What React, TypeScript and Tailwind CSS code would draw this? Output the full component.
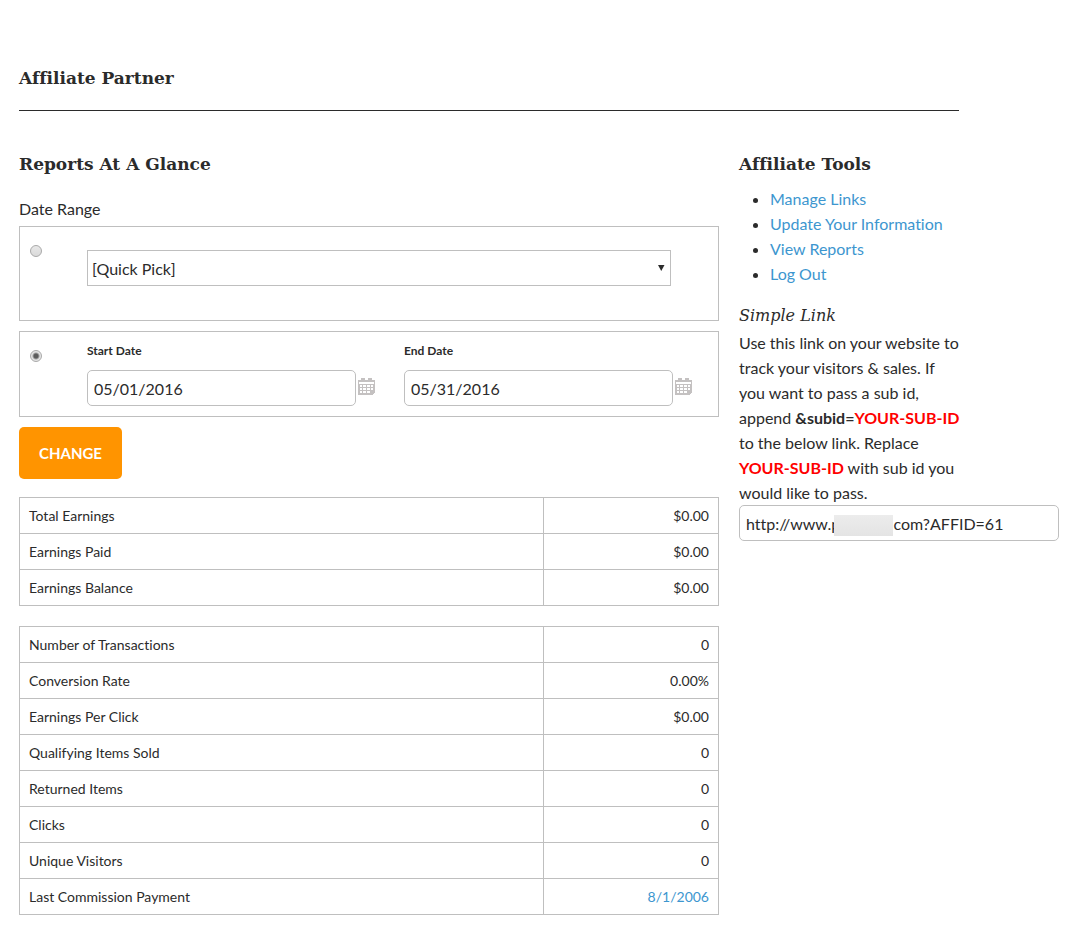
import { useState } from 'react';

const EARNINGS = [
  ['Total Earnings', '$0.00'],
  ['Earnings Paid', '$0.00'],
  ['Earnings Balance', '$0.00'],
];

const ACTIVITY = [
  ['Number of Transactions', '0'],
  ['Conversion Rate', '0.00%'],
  ['Earnings Per Click', '$0.00'],
  ['Qualifying Items Sold', '0'],
  ['Returned Items', '0'],
  ['Clicks', '0'],
  ['Unique Visitors', '0'],
  ['Last Commission Payment', '8/1/2006'],
];

const TOOLS = ['Manage Links', 'Update Your Information', 'View Reports', 'Log Out'];

const AFFILIATE_URL = 'http://www.p' + '\u00a0'.repeat(13) + 'com?AFFID=61';

const headingClass = "font-['DejaVu_Serif',serif] text-[17px] leading-6 font-bold";

function CalendarIcon() {
  return (
    <svg width="17" height="17" viewBox="0 0 17 17" fill="#c4c1c1" shapeRendering="crispEdges" aria-hidden="true">
      <path
        fillRule="evenodd"
        d="M0 2H17V14L14 17H0ZM1 4V6H16V4ZM2 7V9H4V7ZM5 7V9H8V7ZM9 7V9H12V7ZM13 7V9H15V7ZM2 10V12H4V10ZM5 10V12H8V10ZM9 10V12H12V10ZM13 10V12H15V10ZM2 13V15H4V13ZM5 13V15H8V13ZM9 13V15H12V13Z"
      />
      <path d="M3 0H7V4H3ZM10 0H14V4H10Z" />
    </svg>
  );
}

function Radio({ label, checked, onChange }: { label: string; checked: boolean; onChange: () => void }) {
  return (
    <input
      type="radio"
      name="range"
      aria-label={label}
      checked={checked}
      onChange={onChange}
      className="size-3 shrink-0 appearance-none rounded-full border border-[#a9a9a9] bg-linear-to-b from-[#e8e8e8] to-[#dadada] checked:bg-[radial-gradient(circle,#5c5c5c_0_2px,#e4e4e4_4px)]"
    />
  );
}

function DateField({ id, label, initial }: { id: string; label: string; initial: string }) {
  return (
    <div className="min-w-0 flex-1">
      <label htmlFor={id} className="block text-xs leading-4 font-bold">
        {label}
      </label>
      <div className="mt-[11px] flex items-center gap-0.5">
        <input
          id={id}
          defaultValue={initial}
          className="h-9 w-full min-w-0 rounded-[5px] border border-[#bfbfbf] bg-white px-1.5 text-base"
        />
        <button type="button" aria-label={`Choose ${label.toLowerCase()}`} className="-mt-1 shrink-0">
          <CalendarIcon />
        </button>
      </div>
    </div>
  );
}

function ReportTable({ rows }: { rows: string[][] }) {
  return (
    <table className="w-full table-fixed border-collapse text-sm leading-[19px]">
      <colgroup>
        <col className="w-3/4" />
        <col className="w-1/4" />
      </colgroup>
      <tbody>
        {rows.map(([label, value]) => (
          <tr key={label}>
            <th scope="row" className="border border-[#bfbfbf] px-[9px] py-2 text-left font-normal">
              {label}
            </th>
            <td className="border border-[#bfbfbf] px-[9px] py-2 text-right">
              {value.includes('/') ? (
                <a href="#payment" className="text-[#3d96cf]">
                  {value}
                </a>
              ) : (
                value
              )}
            </td>
          </tr>
        ))}
      </tbody>
    </table>
  );
}

export default function App() {
  const [range, setRange] = useState('dates');
  return (
    <main className="min-h-screen bg-white pt-[66px] pr-5 pb-6 pl-[19px] font-[Lato,sans-serif] text-base leading-[25px] text-[#2b2b2b] [font-variant-ligatures:none]">
      <header className="max-w-[940px] border-b border-[#2b2b2b] pb-5">
        <h1 className={headingClass}>Affiliate Partner</h1>
      </header>

      <div className="mt-[41px] flex items-start gap-5">
        <section className="min-w-0 flex-1">
          <h2 className={headingClass}>Reports At A Glance</h2>
          <form className="mt-5" onSubmit={(e) => e.preventDefault()}>
            <p>Date Range</p>
            <div className="mt-[5px] flex border border-[#bfbfbf] pt-[23px] pr-[47px] pb-[34px] pl-2.5">
              <div className="-mt-[5px] flex w-[57px] shrink-0">
                <Radio label="Quick pick" checked={range === 'quick'} onChange={() => setRange('quick')} />
              </div>
              <div className="relative flex-1">
                <select
                  aria-label="Quick pick range"
                  className="block h-9 w-full appearance-none border border-[#bfbfbf] bg-white px-1 pt-0.5 text-base"
                >
                  <option>[Quick Pick]</option>
                </select>
                <svg
                  className="pointer-events-none absolute top-3.5 right-1.5"
                  width="7"
                  height="7"
                  viewBox="0 0 7 7"
                  fill="#2b2b2b"
                  aria-hidden="true"
                >
                  <path d="M0 1H6.5L3.25 7Z" />
                </svg>
              </div>
            </div>
            <div className="mt-2.5 flex border border-[#bfbfbf] pt-[11px] pr-[26px] pb-2.5 pl-2.5">
              <div className="mt-[7px] flex w-[57px] shrink-0">
                <Radio label="Custom dates" checked={range === 'dates'} onChange={() => setRange('dates')} />
              </div>
              <div className="flex flex-1 gap-[29px]">
                <DateField id="start-date" label="Start Date" initial="05/01/2016" />
                <DateField id="end-date" label="End Date" initial="05/31/2016" />
              </div>
            </div>
            <button
              type="submit"
              className="mt-2.5 block h-[52px] rounded-[5px] bg-[#ff9400] px-5 text-[15px] font-bold text-white"
            >
              CHANGE
            </button>
          </form>
          <div className="mt-[18px] flex flex-col gap-5">
            <ReportTable rows={EARNINGS} />
            <ReportTable rows={ACTIVITY} />
          </div>
        </section>

        <aside className="w-80 shrink-0">
          <h2 className={headingClass}>Affiliate Tools</h2>
          <ul className="mt-2.5 list-disc pl-[31px]">
            {TOOLS.map((tool) => (
              <li key={tool}>
                <a href="#tools" className="text-[#3d96cf]">
                  {tool}
                </a>
              </li>
            ))}
          </ul>
          <h3 className="mt-[18px] font-['DejaVu_Serif',serif] text-base leading-6 italic">Simple Link</h3>
          <p className="mt-0.5 max-w-[225px]">
            Use this link on your website to track your visitors &amp; sales. If you want to pass a sub id, append{' '}
            <strong>
              &amp;subid=<span className="whitespace-nowrap text-[#ff0000]">YOUR-SUB-ID</span>
            </strong>{' '}
            to the below link. Replace <strong className="whitespace-nowrap text-[#ff0000]">YOUR-SUB-ID</strong> with sub id you
            would like to pass.
          </p>
          <div className="relative">
            <input
              aria-label="Affiliate link"
              readOnly
              value={AFFILIATE_URL}
              className="block h-9 w-full rounded-[5px] border border-[#bfbfbf] bg-white px-1.5 text-base"
            />
            <div className="absolute top-2.5 left-[95px] h-[21px] w-[59px] bg-linear-to-b from-[#ececec] to-[#e4e4e4]" />
          </div>
        </aside>
      </div>
    </main>
  );
}
